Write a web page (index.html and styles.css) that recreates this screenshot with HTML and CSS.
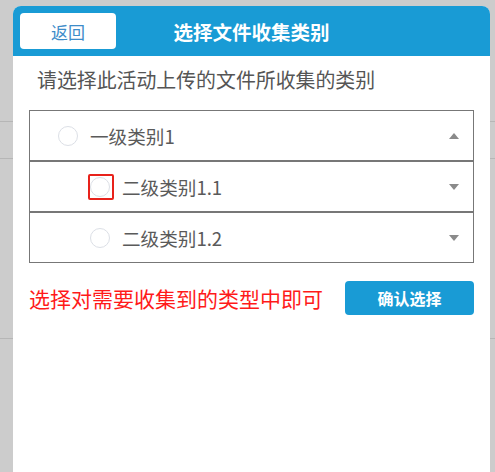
FILE: index.html
```html
<!DOCTYPE html>
<html lang="zh-CN">
<head>
    <meta charset="UTF-8">
    <meta name="viewport" content="width=device-width, initial-scale=1.0">
    <title>选择文件收集类别</title>
    <link rel="stylesheet" href="styles.css">
</head>
<body>
    <div class="backdrop">
        <div class="bg-row bg-row-1"></div>
        <div class="bg-row bg-row-2"></div>
        <div class="bg-row bg-row-3"></div>
    </div>

    <div class="dialog">
        <div class="dialog-header">
            <button class="back-btn">返回</button>
            <h1 class="dialog-title">选择文件收集类别</h1>
        </div>

        <p class="hint">请选择此活动上传的文件所收集的类别</p>

        <ul class="category-list">
            <li class="category-item">
                <span class="radio"></span>
                <span class="category-name">一级类别1</span>
                <span class="arrow arrow-up"></span>
            </li>
            <li class="category-item sub">
                <span class="radio marked"></span>
                <span class="category-name">二级类别1.1</span>
                <span class="arrow arrow-down"></span>
            </li>
            <li class="category-item sub">
                <span class="radio"></span>
                <span class="category-name">二级类别1.2</span>
                <span class="arrow arrow-down"></span>
            </li>
        </ul>

        <div class="dialog-footer">
            <span class="note">选择对需要收集到的类型中即可</span>
            <button class="confirm-btn">确认选择</button>
        </div>
    </div>
</body>
</html>
```

FILE: styles.css
```css
html, body {
    margin: 0;
    padding: 0;
    height: 472px;
    overflow: hidden;
    background-color: #cccccc;
    font-family: "Noto Sans CJK SC", "Microsoft YaHei", sans-serif;
}

/* page behind the dialog */
.backdrop {
    padding-top: 121px;
}

.bg-row {
    border-top: 1px solid #b6b6b6;
}

.bg-row-1 {
    height: 36px;
}

.bg-row-2 {
    height: 179px;
}

/* dialog */
.dialog {
    position: absolute;
    top: 6px;
    left: 13px;
    right: 5px;
    bottom: 0;
    background-color: white;
    border-radius: 8px 8px 0 0;
    overflow: hidden;
}

.dialog-header {
    display: grid;
    grid-template-columns: 1fr auto 1fr;
    align-items: center;
    height: 50px;
    padding: 0 7px;
    background-color: #199bd5;
}

.back-btn {
    justify-self: start;
    width: 96px;
    height: 36px;
    border: none;
    border-radius: 4px;
    background-color: white;
    color: #3d8cc9;
    font-family: inherit;
    font-size: 17px;
    padding: 0;
    cursor: pointer;
}

.dialog-title {
    margin: 0;
    color: white;
    font-size: 19.5px;
    font-weight: 600;
}

.hint {
    margin: 9px 0 0 24px;
    color: #555;
    font-size: 19.9px;
    line-height: 30px;
}

.category-list {
    list-style: none;
    margin: 15px 16px 0;
    padding: 0;
}

.category-item {
    display: flex;
    align-items: center;
    height: 49px;
    padding: 0 14px 0 28px;
    border: 1px solid #777;
    color: #5a5a5a;
    font-size: 18.6px;
}

.category-item.sub {
    padding-left: 60px;
}

.radio {
    position: relative;
    width: 18px;
    height: 18px;
    margin-right: 12px;
    border: 1px solid #dcdfe6;
    border-radius: 50%;
    flex-shrink: 0;
}

/* red annotation box around the radio */
.radio.marked::after {
    content: "";
    position: absolute;
    top: -4px;
    left: -3px;
    width: 22px;
    height: 22px;
    border: 2px solid #e8221b;
    border-radius: 2px;
}

.category-name {
    flex: 1;
}

.arrow {
    width: 0;
    height: 0;
    border-left: 5.5px solid transparent;
    border-right: 5.5px solid transparent;
}

.arrow-up {
    border-bottom: 6px solid #8a8a8a;
}

.arrow-down {
    border-top: 6px solid #8a8a8a;
}

.dialog-footer {
    display: flex;
    justify-content: space-between;
    align-items: center;
    margin: 18px 16px 0;
}

.note {
    color: #ff1a1a;
    font-size: 21px;
}

.confirm-btn {
    width: 129px;
    height: 34px;
    border: none;
    border-radius: 4px;
    background-color: #199bd5;
    color: white;
    font-family: inherit;
    font-size: 16px;
    font-weight: 600;
    cursor: pointer;
}
```
